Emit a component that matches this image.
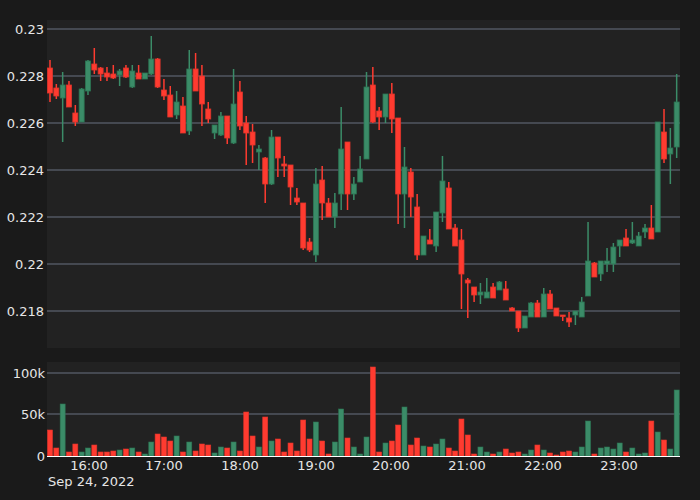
import React from 'react';

// [bodyTop, bodyBottom, wickTop, wickBottom, up(1)/down(0), volumeTopY]
const CANDLES: number[][] = [
  [68, 93, 60, 102, 0, 430], [88, 96, 84, 99, 0, 448], [85, 98, 72, 142, 1, 404], [85, 107, 81, 107, 0, 452],
  [113, 122, 105, 126, 0, 444], [89, 122, 88, 122, 1, 452], [61, 91, 60, 95, 1, 448], [64, 70, 48, 74, 0, 445],
  [68, 74, 67, 81, 0, 452], [73, 77, 67, 81, 0, 452], [74, 78, 65, 79, 0, 451], [71, 75, 69, 86, 1, 450],
  [68, 77, 65, 78, 0, 449], [71, 87, 65, 88, 1, 448], [73, 79, 65, 79, 0, 452], [73, 79, 73, 79, 1, 454],
  [59, 74, 36, 75, 1, 442], [59, 87, 58, 88, 0, 434], [90, 96, 79, 100, 0, 437], [95, 117, 86, 117, 0, 441],
  [102, 115, 91, 119, 1, 436], [106, 133, 97, 133, 0, 452], [69, 131, 50, 135, 1, 442], [69, 91, 53, 91, 0, 451],
  [76, 104, 65, 126, 0, 444], [109, 119, 102, 123, 0, 445], [125, 133, 125, 139, 1, 453], [116, 135, 112, 136, 1, 447],
  [116, 138, 116, 144, 0, 448], [104, 143, 69, 144, 1, 442], [92, 126, 81, 130, 0, 451], [123, 133, 116, 165, 0, 412],
  [132, 145, 124, 163, 0, 436], [149, 152, 145, 170, 1, 447], [158, 184, 157, 203, 0, 417], [137, 184, 130, 185, 1, 441],
  [137, 158, 137, 177, 0, 439], [164, 166, 156, 177, 0, 452], [165, 187, 165, 205, 0, 443], [198, 202, 188, 205, 0, 451],
  [203, 248, 203, 250, 0, 420], [242, 250, 238, 252, 0, 439], [184, 255, 168, 262, 1, 422], [180, 203, 166, 220, 0, 441],
  [203, 217, 198, 217, 0, 454], [203, 217, 193, 228, 1, 442], [149, 194, 107, 210, 1, 409], [142, 194, 142, 210, 0, 438],
  [184, 194, 177, 200, 1, 447], [169, 182, 156, 182, 1, 454], [87, 159, 72, 159, 1, 437], [85, 122, 67, 123, 0, 367],
  [111, 117, 107, 130, 0, 452], [94, 117, 94, 123, 1, 443], [94, 119, 83, 133, 0, 441], [118, 194, 118, 224, 0, 425],
  [167, 194, 147, 228, 1, 407], [172, 197, 168, 217, 0, 445], [207, 255, 194, 260, 0, 438], [236, 255, 236, 255, 1, 446],
  [240, 244, 229, 244, 0, 447], [212, 246, 212, 252, 1, 444], [181, 213, 156, 222, 1, 439], [188, 229, 182, 229, 0, 448],
  [228, 246, 224, 246, 0, 451], [240, 274, 229, 309, 0, 419], [280, 283, 278, 318, 0, 435], [287, 295, 287, 302, 0, 454],
  [292, 295, 283, 304, 1, 447], [292, 298, 278, 298, 1, 452], [287, 298, 283, 298, 0, 454], [282, 290, 281, 290, 1, 452],
  [289, 300, 281, 300, 0, 449], [308, 311, 307, 311, 0, 453], [311, 328, 311, 332, 0, 452], [316, 328, 316, 328, 1, 454],
  [303, 317, 302, 317, 1, 450], [303, 317, 300, 317, 0, 445], [294, 317, 288, 317, 1, 450], [294, 309, 290, 309, 0, 453],
  [308, 316, 308, 316, 0, 455], [315, 316, 315, 321, 0, 452], [318, 322, 312, 327, 0, 451], [311, 315, 311, 325, 1, 452],
  [302, 317, 297, 317, 1, 447], [261, 296, 222, 296, 1, 421], [263, 277, 262, 277, 0, 454], [261, 274, 261, 281, 1, 448],
  [261, 264, 248, 272, 1, 447], [247, 264, 243, 272, 1, 449], [240, 246, 240, 257, 1, 443], [238, 246, 229, 246, 0, 452],
  [240, 243, 222, 244, 1, 448], [236, 246, 232, 246, 1, 454], [228, 232, 224, 238, 1, 453], [228, 239, 205, 239, 0, 421],
  [122, 232, 122, 232, 1, 432], [132, 159, 109, 163, 0, 440], [148, 154, 128, 184, 1, 449], [102, 147, 74, 158, 1, 390],
];

const PRICE_TICKS: [string, number][] = [
  ['0.23', 29], ['0.228', 76], ['0.226', 123], ['0.224', 170], ['0.222', 217], ['0.22', 264], ['0.218', 311],
];
const VOL_TICKS: [string, number][] = [['100k', 373], ['50k', 414], ['0', 456]];
const TIME_TICKS: [string, number][] = [
  ['16:00', 89], ['17:00', 164], ['18:00', 240], ['19:00', 316], ['20:00', 391], ['21:00', 467], ['22:00', 543], ['23:00', 619],
];

const UP = '#3b8c68';
const UP_EDGE = '#2c7553';
const DOWN = '#ff3b30';
const DOWN_EDGE = '#e0352b';

export default function App() {
  return (
    <div className="w-[700px] h-[500px] bg-[#1a1a1a] overflow-hidden" style={{ fontFamily: '"DejaVu Sans", sans-serif' }}>
      <svg width="700" height="500" className="block">
        <rect x="47" y="20" width="633" height="328" fill="#222222" />
        <rect x="47" y="362" width="633" height="95" fill="#222222" />
        {PRICE_TICKS.map(([l, y]) => (
          <g key={l}>
            <line x1="47" x2="680" y1={y} y2={y} stroke="#687080" strokeWidth="1" />
            <text x="44" y={y + 4.5} fill="#e6e6e6" fontSize="13" textAnchor="end">{l}</text>
          </g>
        ))}
        {VOL_TICKS.map(([l, y]) => (
          <g key={l}>
            {l !== '0' && <line x1="47" x2="680" y1={y} y2={y} stroke="#687080" strokeWidth="1" />}
            <text x="45" y={y + 4.5} fill="#e6e6e6" fontSize="13" textAnchor="end">{l}</text>
          </g>
        ))}
        {CANDLES.map(([t, b, wt, wb, up, vt], i) => {
          const x = 50 + i * 6.33;
          const fill = up ? UP : DOWN;
          const edge = up ? UP_EDGE : DOWN_EDGE;
          return (
            <g key={i}>
              <line x1={x} x2={x} y1={wt} y2={wb} stroke={fill} strokeWidth="1.5" />
              <rect x={x - 2.5} y={t} width="5" height={Math.max(b - t, 1.5)} fill={fill} stroke={edge} strokeWidth="0.8" />
              <rect x={x - 2.5} y={vt} width="5" height={456 - vt} fill={fill} stroke={edge} strokeWidth="0.6" />
            </g>
          );
        })}
        <line x1="47" x2="680" y1="456.5" y2="456.5" stroke="#ffffff" strokeWidth="1.2" />
        {TIME_TICKS.map(([l, x]) => (
          <text key={l} x={x} y="470" fill="#e6e6e6" fontSize="13" textAnchor="middle">{l}</text>
        ))}
        <text x="48" y="486" fill="#e6e6e6" fontSize="13">Sep 24, 2022</text>
      </svg>
    </div>
  );
}
